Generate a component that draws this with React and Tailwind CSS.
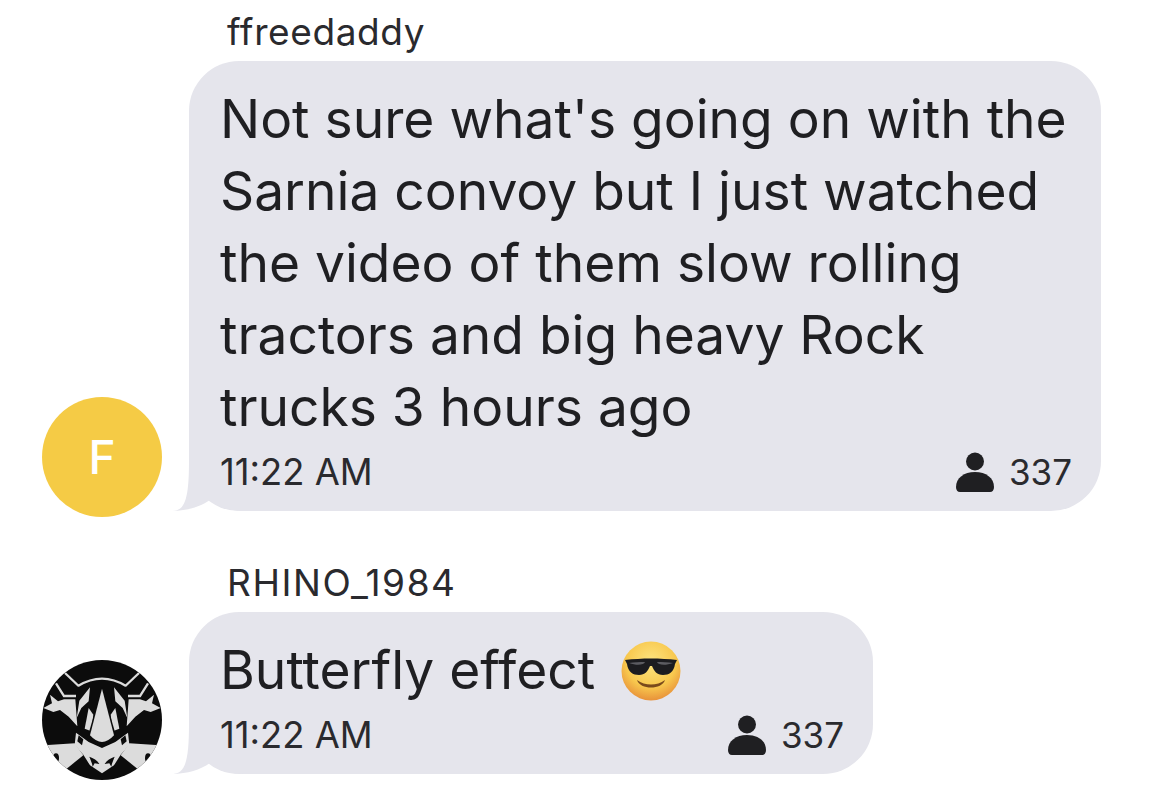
import React from 'react'

const sans = 'font-["Inter","Liberation_Sans",sans-serif]'

function PersonIcon({ className }) {
  return (
    <svg viewBox="0 0 38 40" className={className} fill="#1f1f22">
      <circle cx="19" cy="9.500" r="9" />
      <path d="M0 35c0-9 8-15 19-15s19 6 19 15c0 3-1.500 5-4 5H4c-2.500 0-4-2-4-5z" />
    </svg>
  )
}

// little tail on the bottom left of a bubble, covers the rounded corner
function Tail() {
  return (
    <svg viewBox="0 0 73 50" className="absolute bottom-0 left-[-17px] w-[73px] h-[50px]">
      <path d="M0 50C13 50 17 38 17 0H73V50C58 50 48 46 38 39C28 46 16 49.500 0 50Z" fill="#e5e5ec" />
    </svg>
  )
}

function CoolEmoji() {
  return (
    <svg viewBox="0 0 60 60" className="inline-block w-[60px] h-[60px] mt-[2px]">
      <defs>
        <radialGradient id="face" cx="50%" cy="35%" r="65%">
          <stop offset="0%" stopColor="#fde581" />
          <stop offset="65%" stopColor="#f8c84e" />
          <stop offset="100%" stopColor="#e8923a" />
        </radialGradient>
      </defs>
      <circle cx="30" cy="30" r="29.500" fill="url(#face)" />
      <path d="M4 19c17-2 35-2 52 0l-2 4c-1 8-6 11-12 11-6 0-9-4-11-9h-2c-2 5-5 9-11 9-6 0-11-3-12-11z" fill="#1c1c20" />
      <path d="M8 22c5-1 11-1 16-1-1 3-8 4-16 1zM36 21c5 0 11 0 16 1-8 3-15 2-16-1z" fill="#5c5c62" />
      <path d="M16 39c8 6 20 6 28 0-3 10-25 10-28 0z" fill="#7a4a1c" />
    </svg>
  )
}

function RhinoHalf() {
  return (
    <g>
      <g fill="none" stroke="#dcdcdc" strokeWidth="7">
        <path d="M75 45L116 84" />
        <path d="M48 76L72 114H108" />
        <path d="M114 84Q150 62 186 62" />
      </g>
      <path d="M30 110L54 130L72 124H106L112 205L86 176L60 156L40 162L10 150L36 136Z" fill="#dcdcdc" />
      <path d="M12 262L104 256L130 292L80 332L40 330Z" fill="#dcdcdc" />
      <ellipse cx="48" cy="300" rx="9" ry="14" fill="#0c0c0c" />
      <path d="M118 128L150 88L146 130L124 150L110 180Z" fill="#dcdcdc" />
      <path d="M146 150L134 212L154 220L160 170Z" fill="#dcdcdc" />
      <path d="M108 224L146 252L186 270V346L150 322L130 290L104 260Z" fill="#dcdcdc" />
      <path d="M116 232L130 244L126 262L112 250Z" fill="#0c0c0c" />
      <path d="M148 296C160 300 172 306 178 318L164 316L158 326C156 314 152 306 148 296Z" fill="#0c0c0c" />
    </g>
  )
}

function RhinoAvatar() {
  return (
    <svg viewBox="6 6 360 360" className="w-[120px] h-[120px] shrink-0">
      <defs>
        <clipPath id="disc">
          <circle cx="186" cy="186" r="180" />
        </clipPath>
      </defs>
      <circle cx="186" cy="186" r="180" fill="#0c0c0c" />
      <g clipPath="url(#disc)">
        <RhinoHalf />
        <g transform="translate(372 0) scale(-1 1)">
          <RhinoHalf />
        </g>
        <path d="M186 86L230 240Q186 288 142 240Z" fill="#0c0c0c" />
        <path d="M186 92L222 232Q186 272 150 232Z" fill="#dcdcdc" />
      </g>
    </svg>
  )
}

function Message({ name, nameTracking, lines, width, avatar, children }) {
  return (
    <div className="flex items-end">
      <div className="mb-[-6px] mr-[27px]">{avatar}</div>
      <div>
        <div className={`ml-[38px] mb-[9px] text-[37px] leading-[40px] text-[#2a2a2e] ${nameTracking}`}>{name}</div>
        <div className={`relative rounded-[50px] bg-[#e5e5ec] pl-[31px] pr-[29px] pt-[22px] pb-[19px] ${width}`}>
          <Tail />
          <div className="relative text-[#1f1f22] text-[53.300px] leading-[72px]">
            {lines.map((l, i) => <div key={i}>{l}</div>)}
            {children}
          </div>
          <div className="relative flex items-center justify-between mt-[9px] text-[#2a2a2e] leading-[40px]">
            <span className="text-[36.400px]">11:22 AM</span>
            <span className="flex items-center gap-[15px] text-[35px]">
              <PersonIcon className="w-[38px] h-[40px]" />
              337
            </span>
          </div>
        </div>
      </div>
    </div>
  )
}

export default function App() {
  return (
    <div className={`${sans} w-[1170px] h-[791px] overflow-hidden bg-white pl-[42px] pt-[12px] flex flex-col gap-[52px]`}>
      <Message
        name="ffreedaddy"
        nameTracking="tracking-[0.6px]"
        width="w-[912px]"
        avatar={
          <div className="w-[120px] h-[120px] rounded-full bg-[#f5cb45] flex items-center justify-center text-white text-[46px] font-medium">F</div>
        }
        lines={[
          "Not sure what's going on with the",
          'Sarnia convoy but I just watched',
          'the video of them slow rolling',
          'tractors and big heavy Rock',
          'trucks 3 hours ago',
        ]}
      />
      <Message name="RHINO_1984" nameTracking="tracking-[1.600px]" width="w-[684px]" avatar={<RhinoAvatar />} lines={[]}>
        <div className="flex items-center gap-[26px]">
          Butterfly effect
          <CoolEmoji />
        </div>
      </Message>
    </div>
  )
}
